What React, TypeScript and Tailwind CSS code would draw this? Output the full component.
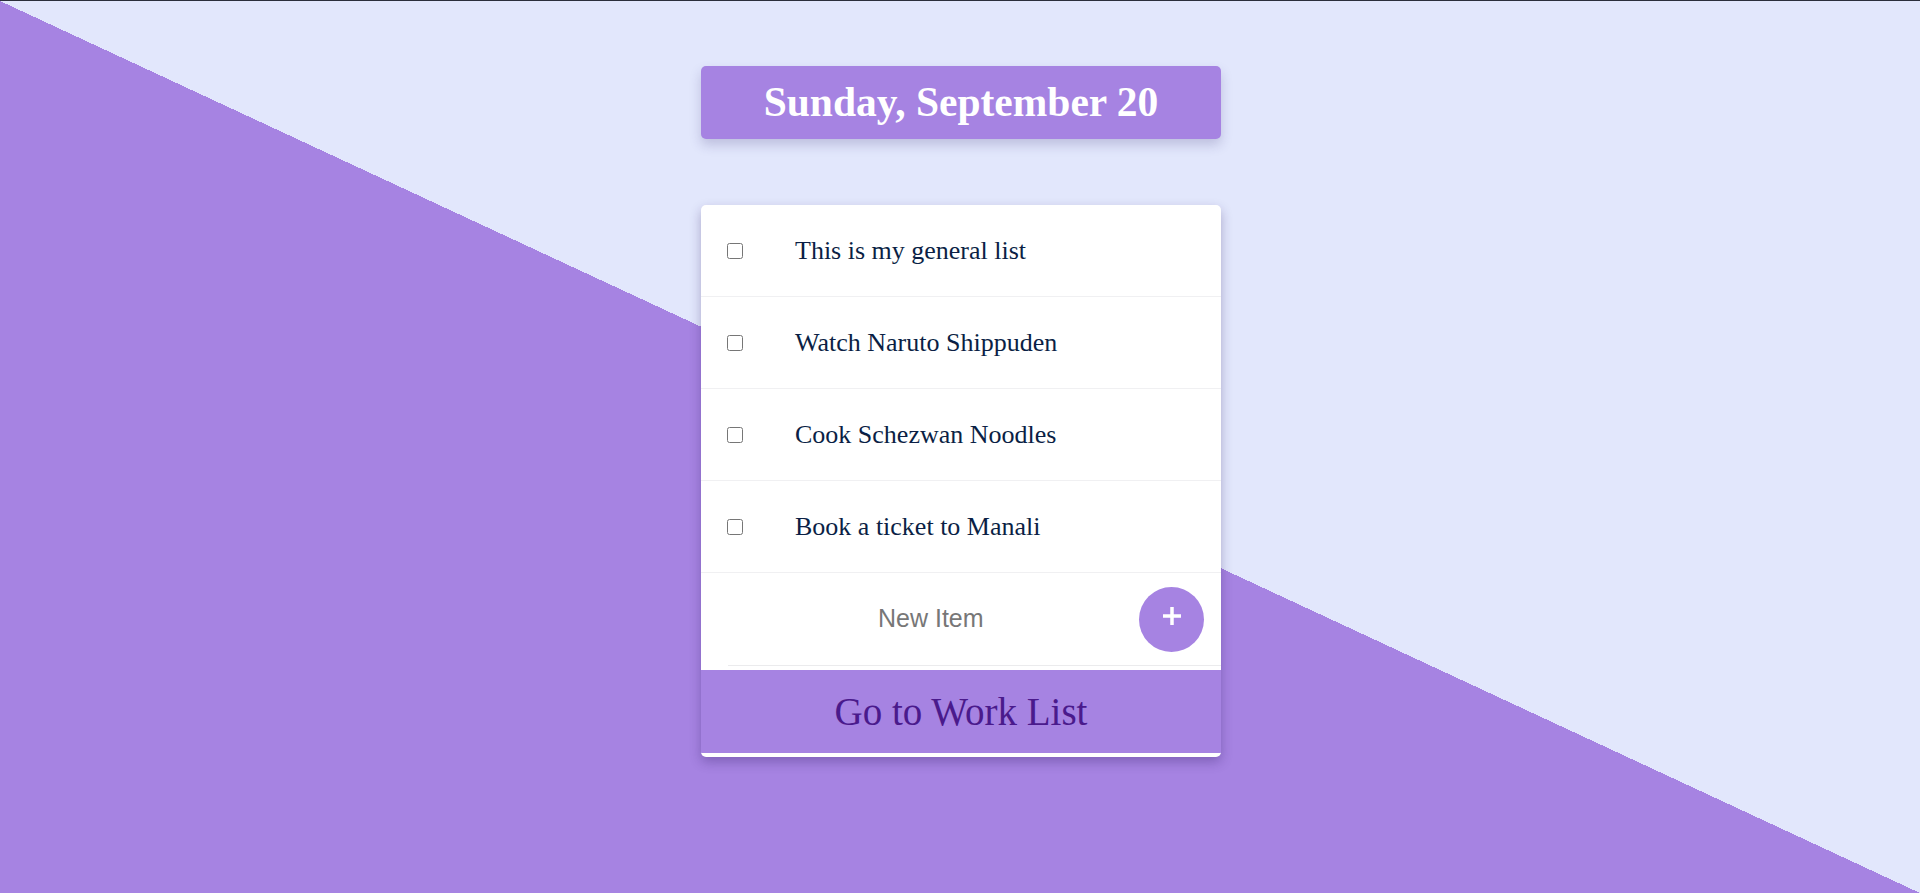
import React from "react";

const items = [
  "This is my general list",
  "Watch Naruto Shippuden",
  "Cook Schezwan Noodles",
  "Book a ticket to Manali",
];

export default function App() {
  return (
    <div className="h-[893px] w-full border-t border-[#2b2e3b] bg-[linear-gradient(to_top_right,#a683e2_50%,#e2e7fc_50%)] flex flex-col items-center pt-[65px] font-['Liberation_Serif',serif]">
      <div className="w-[520px] h-[73px] ml-[2px] rounded-[5px] bg-[#a683e2] shadow-[0_6px_12px_rgba(60,50,120,0.22)] flex items-center justify-center">
        <h1 className="text-white text-[41.5px] font-bold leading-none">Sunday, September 20</h1>
      </div>

      <div className="mt-[66px] ml-[2px] w-[520px] rounded-[5px] bg-white shadow-[0_5px_12px_rgba(40,20,90,0.3)] overflow-hidden pb-[4px]">
        {items.map((t) => (
          <div key={t} className="h-[92px] border-b border-[#f0f0f2] flex items-center">
            <input type="checkbox" className="ml-[26px] w-4 h-4 m-0 shrink-0" />
            <span className="ml-[52px] text-[26px] text-[#0b1f45] leading-none">{t}</span>
          </div>
        ))}
        <div className="ml-[27px] h-[93px] border-b border-[#ebebed] flex items-center">
          <input
            type="text"
            placeholder="New Item"
            className="ml-[150px] w-[200px] min-w-0 outline-none bg-transparent text-[25px] font-['Liberation_Sans',sans-serif] placeholder:text-[#777777] text-[#333]"
          />
          <button className="ml-auto mr-[17px] w-[65px] h-[65px] shrink-0 rounded-full bg-[#a683e2] flex items-center justify-center">
            <svg width="20" height="20" viewBox="0 0 20 20" className="-mt-[6px]">
              <path d="M10 1v18M1 10h18" stroke="white" strokeWidth="3.5" />
            </svg>
          </button>
        </div>
        <div className="mt-[4px] h-[83px] bg-[#a683e2] flex items-center justify-center">
          <span className="text-[39px] text-[#4a1a8c] leading-none">Go to Work List</span>
        </div>
      </div>
    </div>
  );
}
